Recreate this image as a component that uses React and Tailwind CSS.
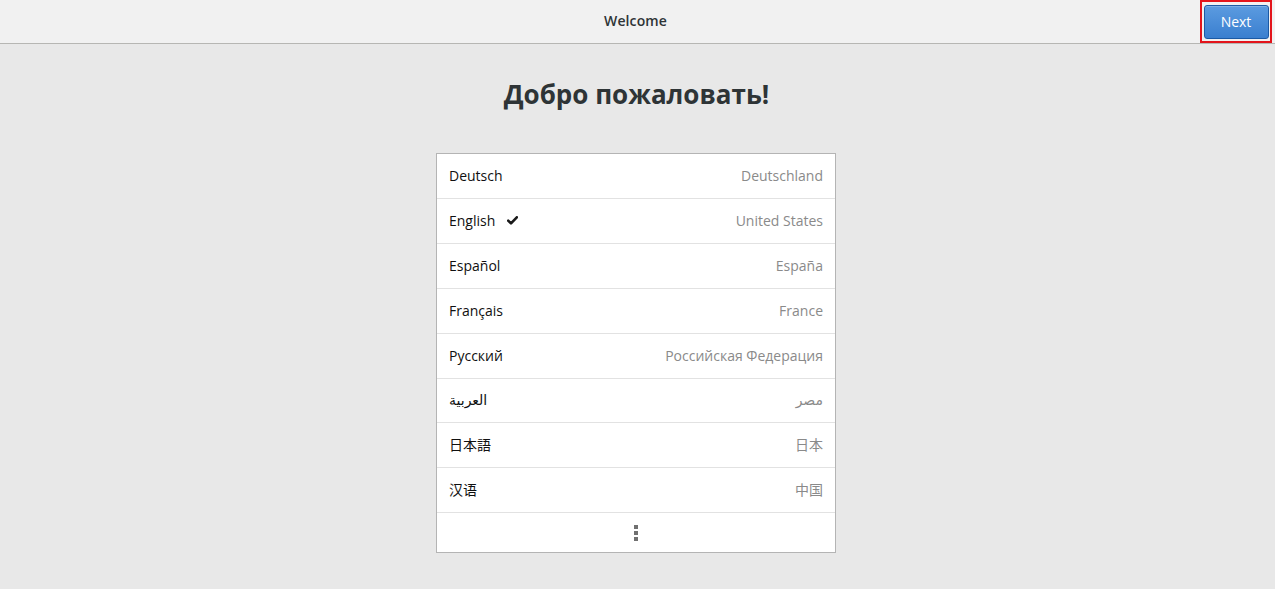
import React from 'react';

const LANGS = [
  { name: 'Deutsch',  region: 'Deutschland' },
  { name: 'English',  region: 'United States', checked: true },
  { name: 'Español',  region: 'España' },
  { name: 'Français', region: 'France' },
  { name: 'Русский',  region: 'Российская Федерация' },
  { name: 'العربية',  region: 'مصر', h: 'h-[44px]' },
  { name: '日本語',    region: '日本' },
  { name: '汉语',      region: '中国' },
];

const FONT = "font-['Open_Sans','DejaVu_Sans','Noto_Sans_CJK_JP',sans-serif]";

export default function App() {
  return (
    <div className={`w-[1275px] h-[589px] bg-[#e8e8e8] ${FONT} text-[#2e3436] overflow-hidden`}>
      {/* Header bar */}
      <div className="relative h-[44px] bg-[#f1f1f1] border-b border-[#b6b6b3] flex items-center justify-center">
        <span className="text-[14px] font-semibold text-[#2e3436] tracking-[0.1px] pr-[4px] pb-[2px]">Welcome</span>
        <div className="absolute right-[3px] top-0 h-[43px] w-[72px] border-2 border-[#e3141b] flex items-center justify-center">
          <button className="w-[65px] h-[34px] rounded-[3px] border border-[#1b5aa5] bg-gradient-to-b from-[#5b9be0] to-[#3a7fcf] text-white text-[14px] shadow-[inset_0_1px_0_rgba(255,255,255,0.2)]">
            Next
          </button>
        </div>
      </div>

      {/* Title */}
      <h1 className="text-center text-[26px] font-bold text-[#2e3436] mt-[30px] leading-[40px] pr-[2px]">
        Добро пожаловать!
      </h1>

      {/* Language list */}
      <div className="ml-[436px] mt-[39px] w-[400px] bg-white border border-[#b4b4b4]">
        {LANGS.map((l) => (
          <div
            key={l.name}
            className={`flex items-center justify-between px-[12px] pb-[2px] ${l.h || 'h-[45px]'} border-b border-[#e2e2e2] text-[14px]`}
          >
            <div className="flex items-center">
              <span className="text-[#101010]">{l.name}</span>
              {l.checked && (
                <svg className="ml-[12px] mt-[1px]" width="11" height="9" viewBox="0 0 11 9">
                  <path d="M1.2 4.6 L4 7.4 L9.8 1.3" fill="none" stroke="#1a1a1a" strokeWidth="2.6" strokeLinecap="round" strokeLinejoin="round" />
                </svg>
              )}
            </div>
            <span className="text-[#8a8a8a]">{l.region}</span>
          </div>
        ))}
        <div className="h-[39px] flex items-center justify-center">
          <div className="flex flex-col gap-[2px]">
            <span className="w-[4px] h-[4px] bg-[#707070]" />
            <span className="w-[4px] h-[4px] bg-[#707070]" />
            <span className="w-[4px] h-[4px] bg-[#707070]" />
          </div>
        </div>
      </div>
    </div>
  );
}
